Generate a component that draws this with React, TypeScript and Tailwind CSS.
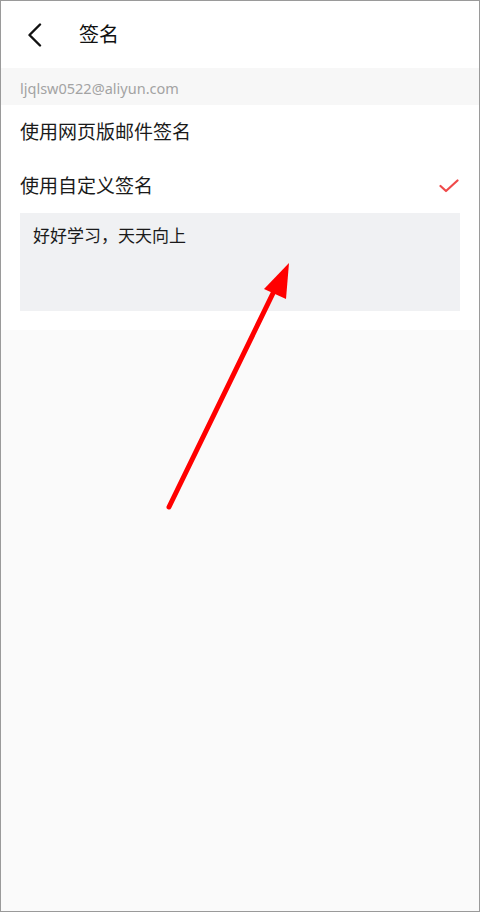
import React from 'react';

export default function App() {
  return (
    <div
      className="relative h-[912px] w-[480px] overflow-hidden border border-[#9a9a9a] bg-[#fafafa]"
      style={{ fontFamily: '"Noto Sans", "Noto Sans CJK SC", sans-serif' }}
    >
      {/* Header */}
      <div className="flex h-[67px] items-center bg-white">
        <button className="ml-[22px] flex h-[30px] w-[24px] items-center justify-center">
          <svg width="18" height="24" viewBox="0 0 18 24" fill="none">
            <path d="M14 1.5 L3.5 12 L14 22.5" stroke="#111" strokeWidth="2.4" strokeLinecap="round" strokeLinejoin="round" />
          </svg>
        </button>
        <h1 className="ml-[32px] text-[20px] text-[#111]">签名</h1>
      </div>

      {/* Account */}
      <div className="flex h-[37px] items-center bg-[#f7f7f7] pl-[19px] pt-[5px] text-[14.5px] text-[#a3a3a3]">
        ljqlsw0522@aliyun.com
      </div>

      {/* Options */}
      <div className="bg-white pb-[19px]">
        <div className="flex h-[54px] items-center px-[19px] text-[19px] text-[#1a1a1a]">使用网页版邮件签名</div>
        <div className="flex h-[54px] items-center justify-between pl-[19px] pr-[20px] text-[19px] text-[#1a1a1a]">
          <span>使用自定义签名</span>
          <svg width="20" height="14" viewBox="0 0 20 14" fill="none">
            <path d="M1.5 7 L7 12 L18.5 1.5" stroke="#ef4a4a" strokeWidth="2.2" strokeLinecap="round" strokeLinejoin="round" />
          </svg>
        </div>
        <div className="mx-[19px] h-[98px] bg-[#f0f1f3] px-[13px] pt-[10px] text-[17px] text-[#1a1a1a]">
          好好学习，天天向上
        </div>
      </div>

      {/* Annotation arrow */}
      <svg className="pointer-events-none absolute left-0 top-0" width="480" height="912" viewBox="0 0 480 912">
        <line x1="168" y1="506" x2="276" y2="284" stroke="#ff0000" strokeWidth="5" strokeLinecap="round" />
        <polygon points="288,262 263,288 285,298" fill="#ff0000" />
      </svg>
    </div>
  );
}
